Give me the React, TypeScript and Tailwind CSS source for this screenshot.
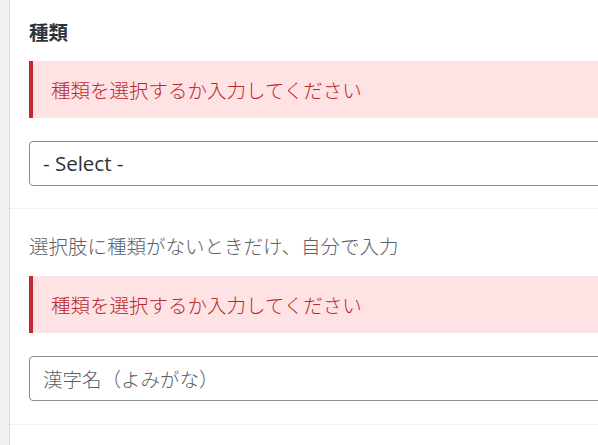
import React from "react";

const jp = { fontFamily: '"Noto Sans CJK JP", "Noto Sans", sans-serif' };
const latin = { fontFamily: '"Open Sans", "Noto Sans CJK JP", sans-serif' };

function ErrorNotice({ className = "" }: { className?: string }) {
  return (
    <div
      className={`h-[57px] border-l-4 border-[#c3282c] bg-[#ffe2e4] flex items-center pl-[18px] text-[#b8282b] text-[19.5px] leading-[28px] font-light ${className}`}
      style={jp}
    >
      種類を選択するか入力してください
    </div>
  );
}

export default function App() {
  return (
    <div className="w-[598px] h-[445px] overflow-hidden bg-[#f0f0f1] flex">
      <div className="ml-[9px] border-l border-[#dcdcde] bg-white w-[720px] shrink-0">
        <section className="pl-[19px] pt-[18px] pb-[22px] border-b border-[#f0f0f1]">
          <h2 className="font-bold text-[19.5px] leading-[28px] text-[#2c3338]" style={jp}>
            種類
          </h2>
          <ErrorNotice className="mt-[15px]" />
          <div
            className="mt-[23px] h-[45px] border border-[#8c8f94] rounded-[4px] flex items-center pl-[13px] text-[20.5px] text-[#2c3338]"
            style={latin}
          >
            - Select -
          </div>
        </section>
        <section className="pl-[19px] pt-[23px] pb-[23px] border-b border-[#f0f0f1]">
          <p className="text-[19.5px] leading-[28px] text-[#5a6168] font-light" style={jp}>
            選択肢に種類がないときだけ、自分で入力
          </p>
          <ErrorNotice className="mt-[16px]" />
          <div
            className="mt-[23px] h-[45px] border border-[#8c8f94] rounded-[4px] flex items-center pl-[13px] text-[19.5px] text-[#5a6168] font-light"
            style={jp}
          >
            漢字名（よみがな）
          </div>
        </section>
      </div>
    </div>
  );
}
